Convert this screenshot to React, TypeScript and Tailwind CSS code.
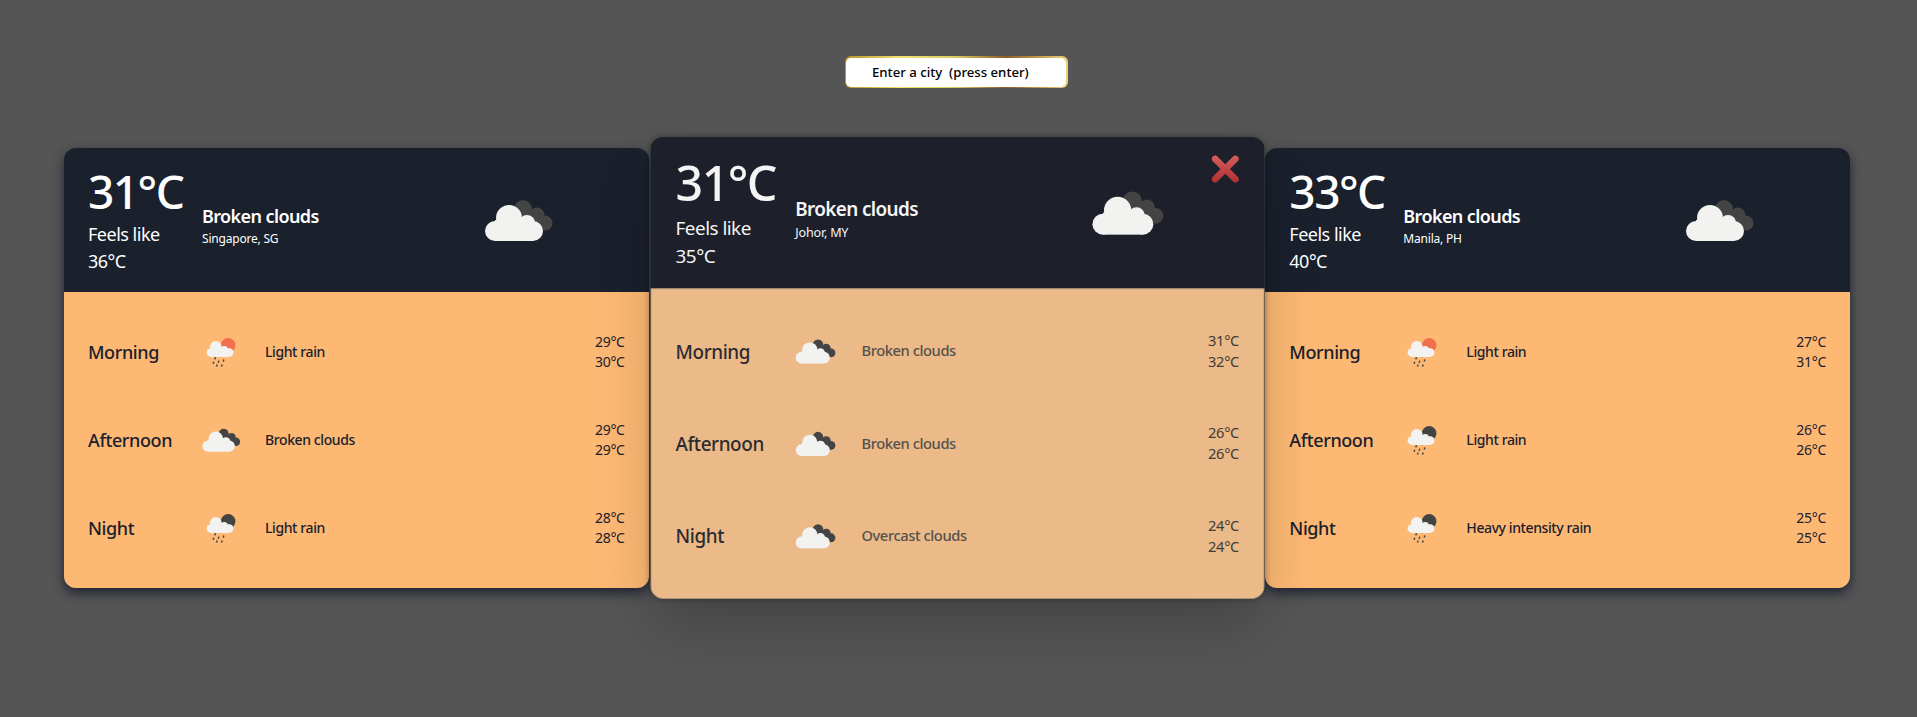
import React from "react";

const font = { fontFamily: '"Noto Sans", "Open Sans", sans-serif' };

type IconKind = "broken" | "rainDay" | "rainNight";

function CloudPair({ dark }: { dark: string }) {
  return (
    <g>
      <circle cx="53" cy="39" r="9" fill={dark} />
      <circle cx="67" cy="45" r="7.5" fill={dark} />
      <circle cx="75" cy="53" r="7.5" fill={dark} />
      <path d="M50 40 L72 48 L76 60 L55 58 Z" fill={dark} />
      <g fill="#f2f2f0">
        <circle cx="39" cy="48" r="13" />
        <circle cx="57" cy="53" r="8" />
        <circle cx="25" cy="61" r="10" />
        <circle cx="63" cy="61" r="10" />
        <rect x="25" y="50" width="38" height="21" />
      </g>
    </g>
  );
}

function RainCloud({ sun }: { sun: string }) {
  const drops = [
    [37, 59],
    [34, 67],
    [43, 65],
    [52, 63],
    [40, 72],
    [49, 72],
  ];
  return (
    <g>
      <circle cx="61" cy="38" r="13" fill={sun} />
      <g fill="#f2f2f0">
        <circle cx="39" cy="41" r="10.5" />
        <circle cx="54" cy="46" r="6.5" />
        <circle cx="30" cy="51" r="7.5" />
        <circle cx="63" cy="51" r="7.5" />
        <rect x="30" y="44" width="33" height="15" />
      </g>
      <g fill="#444444">
        {drops.map(([x, y]) => (
          <rect key={`${x}-${y}`} x={x} y={y} width="2.6" height="4" transform={`rotate(15 ${x} ${y})`} />
        ))}
      </g>
    </g>
  );
}

function WeatherIcon({ kind, large = false }: { kind: IconKind; large?: boolean }) {
  return (
    <svg viewBox="0 0 100 100" className={large ? "h-[100px] w-[100px] shrink-0" : "h-14 w-14 shrink-0"}>
      {kind === "broken" && <CloudPair dark="#444444" />}
      {kind === "rainDay" && <RainCloud sun="#f0704e" />}
      {kind === "rainNight" && <RainCloud sun="#444444" />}
    </svg>
  );
}

function CloseIcon() {
  return (
    <svg viewBox="0 0 28 28" className="absolute right-[24px] top-[17px] h-[27px] w-[27px]">
      <defs>
        <linearGradient id="closeRed" gradientUnits="userSpaceOnUse" x1="0" y1="0" x2="0" y2="28">
          <stop offset="0" stopColor="#d4605e" />
          <stop offset="1" stopColor="#b02e30" />
        </linearGradient>
      </defs>
      <path d="M4 4 L24 24 M24 4 L4 24" stroke="url(#closeRed)" strokeWidth="6.5" strokeLinecap="round" fill="none" />
    </svg>
  );
}

type Part = { name: string; icon: IconKind; text: string; high: string; low: string };

type City = {
  temp: string;
  feels: string;
  place: string;
  parts: Part[];
};

const cities: City[] = [
  {
    temp: "31°C",
    feels: "36°C",
    place: "Singapore, SG",
    parts: [
      { name: "Morning", icon: "rainDay", text: "Light rain", high: "29°C", low: "30°C" },
      { name: "Afternoon", icon: "broken", text: "Broken clouds", high: "29°C", low: "29°C" },
      { name: "Night", icon: "rainNight", text: "Light rain", high: "28°C", low: "28°C" },
    ],
  },
  {
    temp: "31°C",
    feels: "35°C",
    place: "Johor, MY",
    parts: [
      { name: "Morning", icon: "broken", text: "Broken clouds", high: "31°C", low: "32°C" },
      { name: "Afternoon", icon: "broken", text: "Broken clouds", high: "26°C", low: "26°C" },
      { name: "Night", icon: "broken", text: "Overcast clouds", high: "24°C", low: "24°C" },
    ],
  },
  {
    temp: "33°C",
    feels: "40°C",
    place: "Manila, PH",
    parts: [
      { name: "Morning", icon: "rainDay", text: "Light rain", high: "27°C", low: "31°C" },
      { name: "Afternoon", icon: "rainNight", text: "Light rain", high: "26°C", low: "26°C" },
      { name: "Night", icon: "rainNight", text: "Heavy intensity rain", high: "25°C", low: "25°C" },
    ],
  },
];

function CityCard({ city, active }: { city: City; active: boolean }) {
  return (
    <div
      className={
        active
          ? "relative z-10 scale-105 overflow-hidden rounded-xl shadow-[0_0_6px_rgba(0,0,0,0.35),0_30px_60px_-8px_rgba(0,0,0,0.22)]"
          : "relative overflow-hidden rounded-xl shadow-[0_5px_12px_rgba(20,26,44,0.85)]"
      }
    >
      <div className={active ? "flex h-[144px] bg-[#1d202a] pl-6 text-[#f4f4f4]" : "flex h-[144px] bg-[#1a202c] pl-6 text-white"}>
        <div className="w-[114px] shrink-0 pt-[19px]">
          <div className="text-[46px] font-medium leading-[48px] tracking-[-1.5px]">{city.temp}</div>
          <div className="mt-[5px] text-lg leading-7 tracking-[-0.5px]">Feels like</div>
          <div className="mt-[-1px] text-lg leading-7 tracking-[-0.5px]">{city.feels}</div>
        </div>
        <div className="w-[268px] shrink-0 pt-[56px]">
          <div className="text-lg font-semibold leading-6 tracking-[-0.6px]">Broken clouds</div>
          <div className="mt-[3px] text-xs leading-4 tracking-[-0.2px]">{city.place}</div>
        </div>
        <div className="flex items-center">
          <WeatherIcon kind="broken" large />
        </div>
      </div>
      {active && <CloseIcon />}
      <div
        className={
          active
            ? "rounded-b-xl border border-[#a8947a] bg-[#ebba88] px-[23px] py-[15px] text-[#2c2c30]"
            : "bg-[#fdb974] p-6 py-4 text-[#1a202c]"
        }
      >
        {city.parts.map((p) => (
          <div key={p.name} className="flex h-[88px] items-center">
            <div className="w-[106px] shrink-0 text-lg font-medium tracking-[-0.4px]">{p.name}</div>
            <WeatherIcon kind={p.icon} />
            <div className={active ? "ml-[15px] flex-1 text-sm font-medium tracking-[-0.4px] text-[#55514c]" : "ml-[15px] flex-1 text-sm font-medium tracking-[-0.4px]"}>
              {p.text}
            </div>
            <div className={active ? "text-right text-sm leading-5 tracking-[-0.3px] text-[#3f3d3c]" : "text-right text-sm leading-5 tracking-[-0.3px]"}>
              <div>{p.high}</div>
              <div>{p.low}</div>
            </div>
          </div>
        ))}
      </div>
    </div>
  );
}

export default function App() {
  return (
    <div className="min-h-screen bg-[#555555]" style={font}>
      <div className="flex justify-center pr-[5px] pt-14">
        <div className="h-8 w-[223px] rounded-md bg-[linear-gradient(90deg,#b8942e,#f2e36c_25%,#d9c964_50%,#8c5c2a_72%,#c9a050_88%,#e6d27a)] p-[1.5px]">
          <input
            className="h-full w-full rounded-[5px] bg-white pl-[26px] text-[13.2px] font-medium text-black outline-none placeholder:text-black"
            placeholder="Enter a city  (press enter)"
          />
        </div>
      </div>
      <div className="ml-16 mt-[60px] grid w-[1786px] grid-cols-3 gap-4">
        {cities.map((c, i) => (
          <CityCard key={c.place} city={c} active={i === 1} />
        ))}
      </div>
    </div>
  );
}
